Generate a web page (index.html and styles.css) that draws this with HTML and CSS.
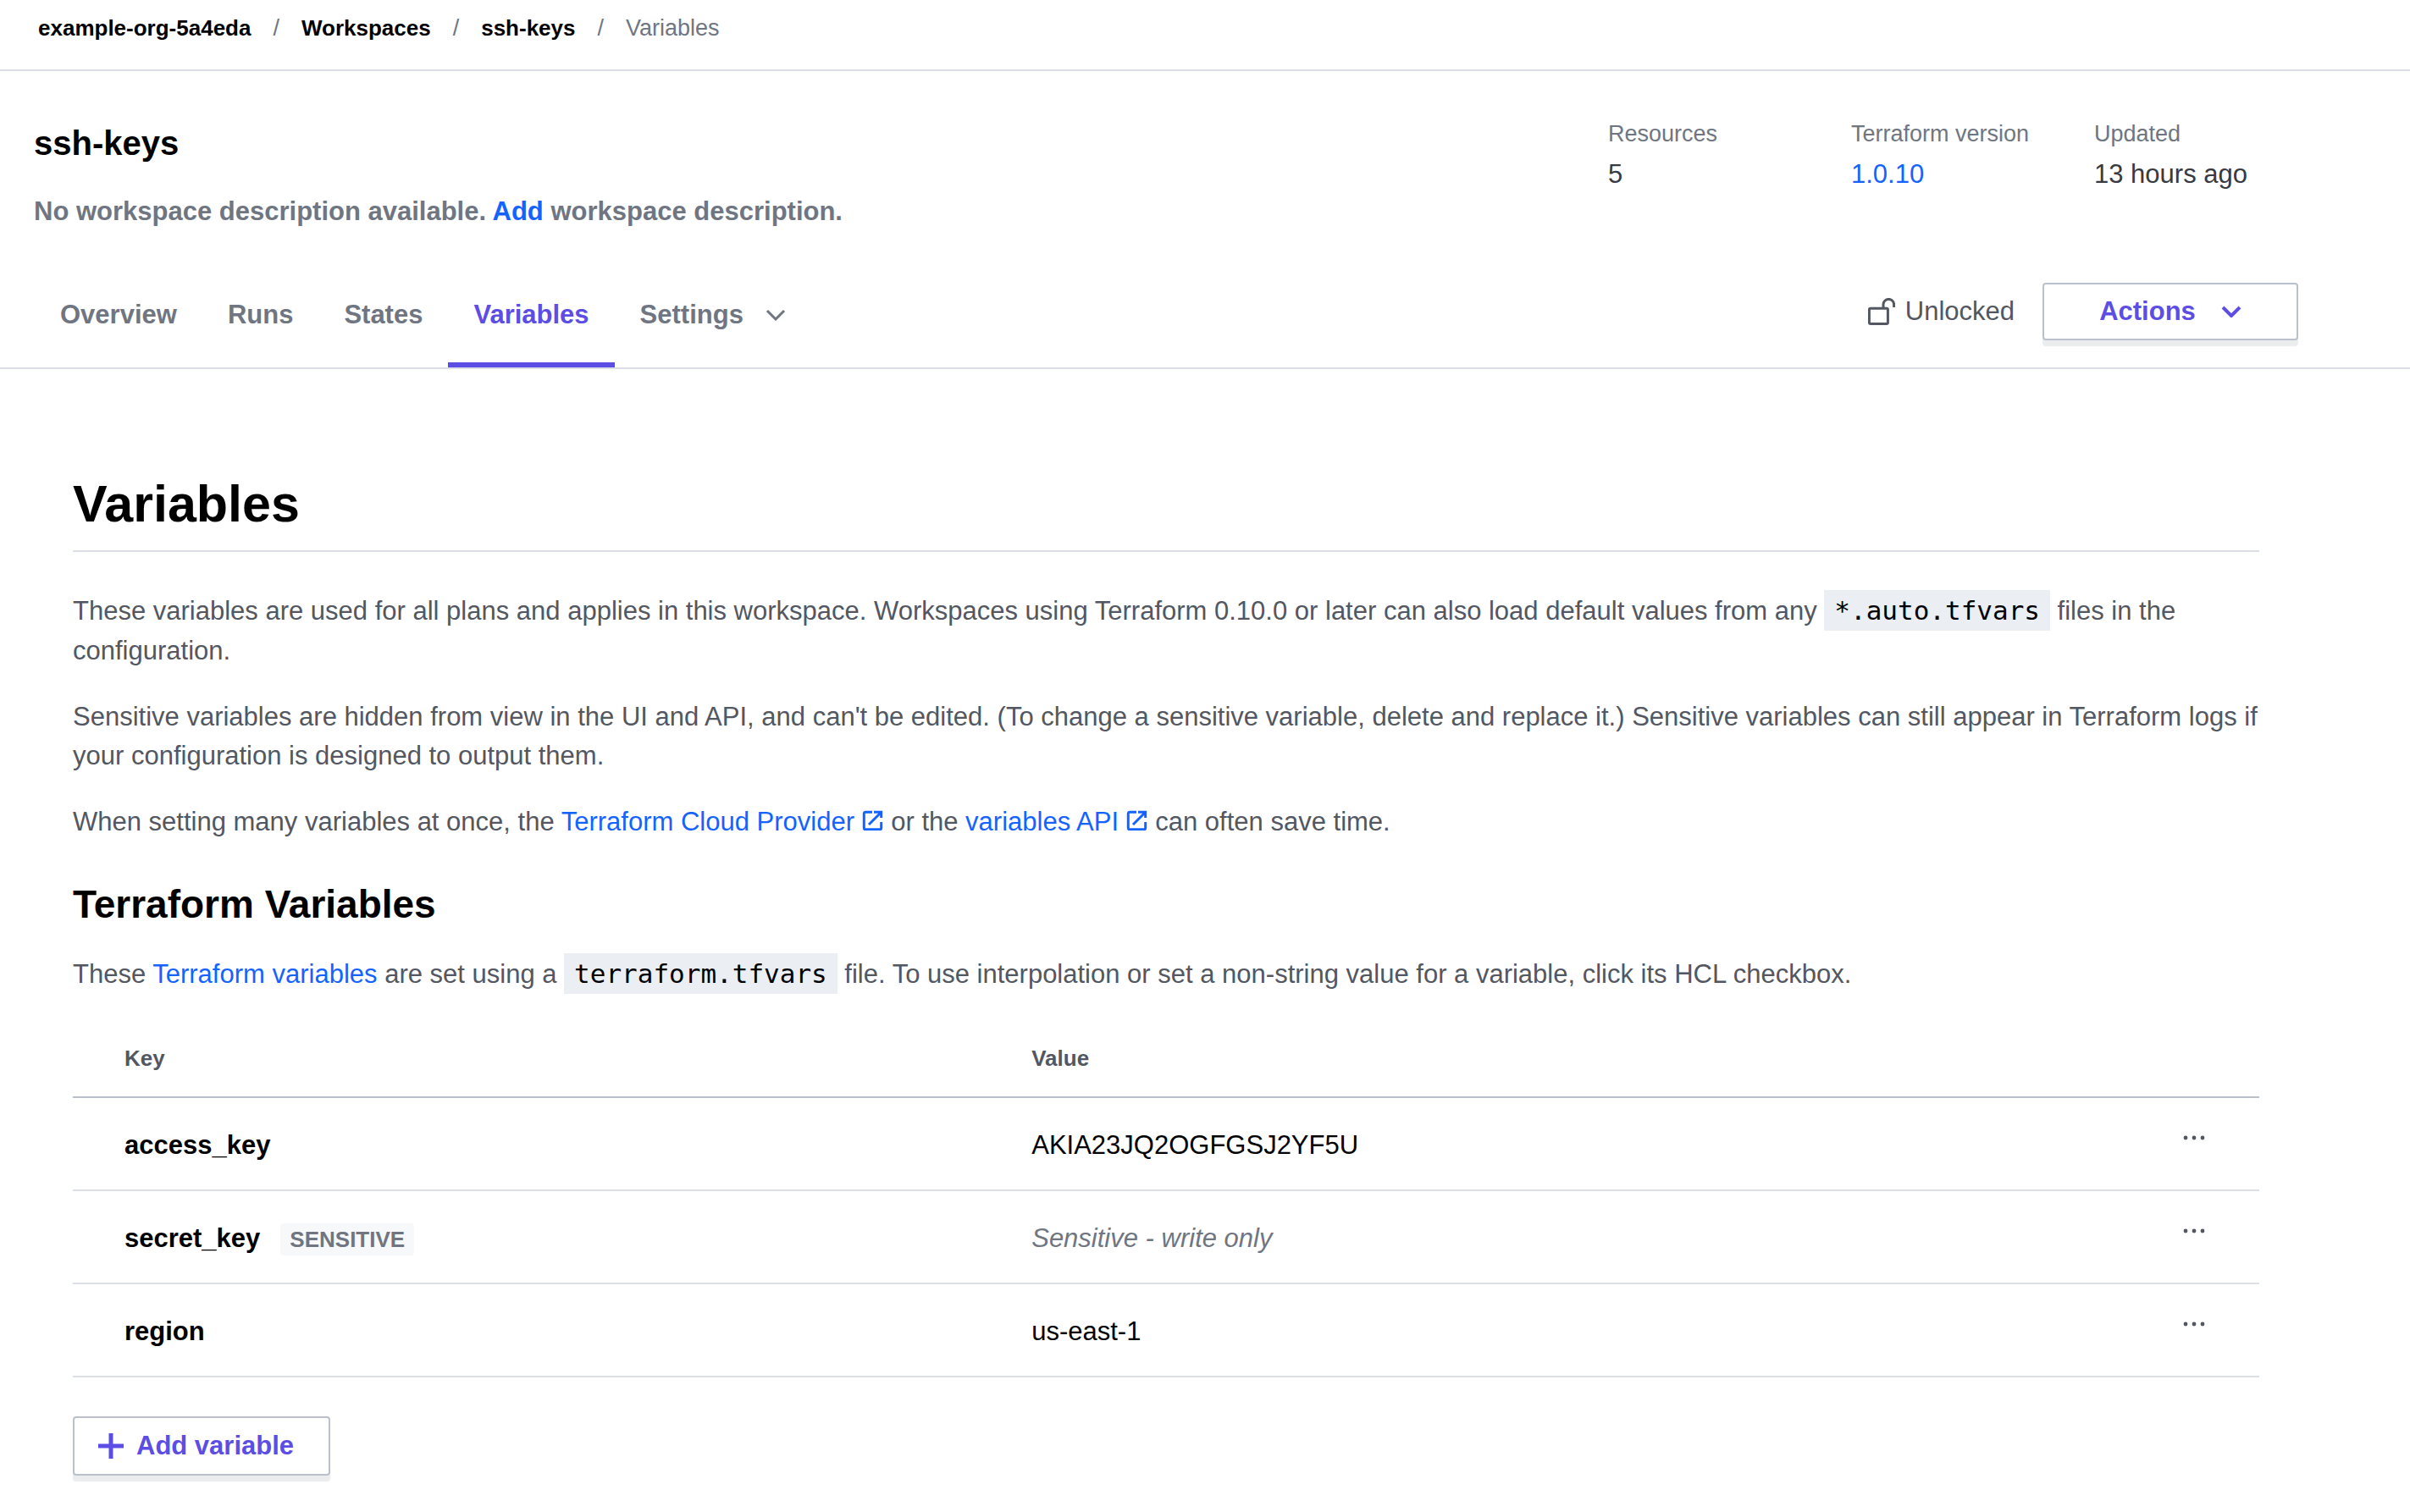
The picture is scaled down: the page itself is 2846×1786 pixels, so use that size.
FILE: index.html
```html
<!DOCTYPE html>
<html lang="en">
<head>
<meta charset="utf-8">
<meta name="viewport" content="width=device-width, initial-scale=1">
<title>Variables | ssh-keys</title>
<link rel="stylesheet" href="styles.css">
</head>
<body>
<nav class="breadcrumbs" aria-label="Breadcrumb">
  <ol class="breadcrumbs-list">
    <li class="crumb"><a href="#org">example-org-5a4eda</a></li>
    <li class="crumb"><a href="#workspaces">Workspaces</a></li>
    <li class="crumb"><a href="#ssh-keys">ssh-keys</a></li>
    <li class="crumb crumb-current" aria-current="page">Variables</li>
  </ol>
</nav>

<header class="workspace">
  <div class="workspace-summary">
    <div class="workspace-title">
      <h2 class="workspace-name">ssh-keys</h2>
      <p class="workspace-description">No workspace description available. <a href="#add-description">Add</a> workspace description.</p>
    </div>
    <dl class="stats">
      <div class="stat"><dt>Resources</dt><dd>5</dd></div>
      <div class="stat"><dt>Terraform version</dt><dd><a href="#version">1.0.10</a></dd></div>
      <div class="stat"><dt>Updated</dt><dd>13 hours ago</dd></div>
    </dl>
  </div>
  <div class="workspace-bar">
    <nav class="tabs" aria-label="Workspace">
      <a class="tab" href="#overview">Overview</a>
      <a class="tab" href="#runs">Runs</a>
      <a class="tab" href="#states">States</a>
      <a class="tab tab-active" href="#variables" aria-current="page">Variables</a>
      <a class="tab" href="#settings">Settings
        <svg class="chevron" viewBox="0 0 24 14" aria-hidden="true"><path d="M2 2l10 10L22 2"/></svg>
      </a>
    </nav>
    <div class="workspace-actions">
      <span class="lock-state">
        <svg class="lock-icon" viewBox="0 0 32 32" aria-hidden="true"><rect x="1.4" y="12.2" width="22" height="18.2" rx="1.5"/><path d="M18 12V7.7a6.3 6.3 0 0 1 12.6 0V11"/></svg>
        Unlocked
      </span>
      <button class="button button-actions" type="button">Actions
        <svg class="chevron chevron-bold" viewBox="0 0 24 14" aria-hidden="true"><path d="M2 2l10 10L22 2"/></svg>
      </button>
    </div>
  </div>
</header>

<main class="content" id="variables">
  <h1 class="page-title">Variables</h1>
  <div class="intro">
    <p>These variables are used for all plans and applies in this workspace. Workspaces using Terraform 0.10.0 or later can also load default values from any <code>*.auto.tfvars</code> files in the configuration.</p>
    <p>Sensitive variables are hidden from view in the UI and API, and can't be edited. (To change a sensitive variable, delete and replace it.) Sensitive variables can still appear in Terraform logs if your configuration is designed to output them.</p>
    <p>When setting many variables at once, the <a href="#provider">Terraform Cloud Provider <svg class="external" viewBox="0 0 26 24" aria-hidden="true"><path d="M12 2.3H4Q2.3 2.3 2.3 4V21Q2.3 22.7 4 22.7H21Q22.7 22.7 22.7 21V14M14 2.3H22.7V9M22 3L8 17"/></svg></a> or the <a href="#api">variables API <svg class="external" viewBox="0 0 26 24" aria-hidden="true"><path d="M12 2.3H4Q2.3 2.3 2.3 4V21Q2.3 22.7 4 22.7H21Q22.7 22.7 22.7 21V14M14 2.3H22.7V9M22 3L8 17"/></svg></a> can often save time.</p>
  </div>

  <section class="variables">
    <h2 class="section-title">Terraform Variables</h2>
    <p>These <a href="#terraform-variables">Terraform variables</a> are set using a <code>terraform.tfvars</code> file. To use interpolation or set a non-string value for a variable, click its HCL checkbox.</p>
    <table class="variables-table">
      <thead>
        <tr><th class="col-key" scope="col">Key</th><th scope="col">Value</th><td class="col-menu"></td></tr>
      </thead>
      <tbody>
        <tr>
          <th scope="row">access_key</th>
          <td>AKIA23JQ2OGFGSJ2YF5U</td>
          <td class="menu-cell"><button class="menu-button" type="button" aria-label="access_key options"><svg viewBox="0 0 26 6" aria-hidden="true"><circle cx="3" cy="3" r="2.4"/><circle cx="13" cy="3" r="2.4"/><circle cx="23" cy="3" r="2.4"/></svg></button></td>
        </tr>
        <tr>
          <th scope="row">secret_key<span class="badge">SENSITIVE</span></th>
          <td class="value-hidden">Sensitive - write only</td>
          <td class="menu-cell"><button class="menu-button" type="button" aria-label="secret_key options"><svg viewBox="0 0 26 6" aria-hidden="true"><circle cx="3" cy="3" r="2.4"/><circle cx="13" cy="3" r="2.4"/><circle cx="23" cy="3" r="2.4"/></svg></button></td>
        </tr>
        <tr>
          <th scope="row">region</th>
          <td>us-east-1</td>
          <td class="menu-cell"><button class="menu-button" type="button" aria-label="region options"><svg viewBox="0 0 26 6" aria-hidden="true"><circle cx="3" cy="3" r="2.4"/><circle cx="13" cy="3" r="2.4"/><circle cx="23" cy="3" r="2.4"/></svg></button></td>
        </tr>
      </tbody>
    </table>
    <button class="button button-add" type="button">
      <svg class="plus" viewBox="0 0 30 30" aria-hidden="true"><path d="M15 0V30M0 15H30"/></svg>
      Add variable
    </button>
  </section>
</main>
</body>
</html>
```
FILE: styles.css
```css
:root {
  --black: #000;
  --gray-800: #373a42;
  --gray-700: #525761;
  --gray-500: #6f7682;
  --gray-300: #bac1cc;
  --gray-200: #dce0e6;
  --gray-100: #ebeef2;
  --gray-050: #f7f8fa;
  --purple: #5c4ee5;
  --blue: #1563ff;
}

* { box-sizing: border-box; }

body {
  margin: 0;
  background: #fff;
  color: var(--gray-700);
  font: 31px/46px "Liberation Sans", Arial, sans-serif;
}

h1, h2, p, dl, dd, ol { margin: 0; padding: 0; }

a { color: var(--blue); text-decoration: none; }

svg { flex: none; fill: none; stroke: currentColor; }

/* Breadcrumbs */
.breadcrumbs {
  padding: 18px 45px 34px;
  border-bottom: 2px solid var(--gray-200);
}

.breadcrumbs-list {
  display: flex;
  list-style: none;
  font-size: 27px;
  line-height: 30px;
}

.crumb a {
  color: var(--black);
  font-size: 26px;
  font-weight: 700;
}

.crumb-current { color: var(--gray-500); }

.crumb + .crumb::before {
  content: "/";
  padding: 0 26px;
  color: var(--gray-500);
}

/* Workspace header */
.workspace { border-bottom: 2px solid var(--gray-200); }

.workspace-summary {
  display: flex;
  justify-content: space-between;
  padding: 59px 86px 0 40px;
}

.workspace-title {
  display: flex;
  flex-direction: column;
  gap: 34px;
  padding-top: 2px;
}

.workspace-name {
  color: var(--black);
  font-size: 40px;
  line-height: 48px;
}

.workspace-description { color: var(--gray-500); font-weight: 700; }

.stats {
  display: grid;
  grid-template-columns: repeat(3, 287px);
}

.stat {
  display: flex;
  flex-direction: column;
  gap: 10px;
}

.stat dt {
  color: var(--gray-500);
  font-size: 27px;
  line-height: 30px;
}

.stat dd { color: var(--gray-800); }

.workspace-bar {
  display: flex;
  justify-content: space-between;
  align-items: flex-start;
  padding: 61px 132px 0 41px;
}

.tabs { display: flex; }

.tab {
  display: flex;
  align-items: center;
  gap: 26px;
  padding: 15px 30px 33px;
  border-bottom: 6px solid transparent;
  color: var(--gray-500);
  font-weight: 700;
}

.tab-active { border-color: var(--purple); color: var(--purple); }

.chevron {
  width: 24px;
  height: 14px;
  stroke-width: 3;
}

.chevron-bold { stroke-width: 4; }

.workspace-actions {
  display: flex;
  align-items: center;
  gap: 33px;
}

.lock-state {
  display: flex;
  align-items: center;
  gap: 12px;
}

.lock-icon {
  width: 32px;
  height: 32px;
  stroke-width: 3;
}

.button {
  display: flex;
  align-items: center;
  border: 2px solid var(--gray-300);
  border-radius: 4px;
  background: #fff;
  box-shadow: 0 7px 1px rgba(37, 42, 60, .09);
  color: var(--purple);
  font: inherit;
  font-weight: 700;
}

.button-actions {
  justify-content: center;
  gap: 30px;
  width: 302px;
  padding: 9px 0;
}

/* Page content */
.content { padding: 123px 178px 36px 86px; }

.page-title {
  padding-bottom: 19px;
  border-bottom: 2px solid var(--gray-200);
  color: var(--black);
  font-size: 61px;
  line-height: 72px;
}

.intro {
  display: flex;
  flex-direction: column;
  gap: 32px;
  margin-top: 45px;
}

code {
  display: inline-block;
  margin-bottom: 1px;
  padding: 6px 12px;
  background: var(--gray-100);
  color: var(--black);
  font: 31px/36px "DejaVu Sans Mono", monospace;
}

.external {
  width: 26px;
  height: 24px;
  stroke-width: 3;
  vertical-align: baseline;
}

.variables { margin-top: 46px; }

.section-title {
  margin-bottom: 30px;
  color: var(--black);
  font-size: 46px;
  line-height: 56px;
}

.variables-table {
  width: 100%;
  margin-top: 30px;
  border-collapse: separate;
  border-spacing: 0;
  table-layout: fixed;
  color: var(--black);
  text-align: left;
}

.variables-table th,
.variables-table td {
  padding: 33px 0 29px;
  border-bottom: 2px solid var(--gray-200);
  vertical-align: top;
}

.variables-table th:first-child { padding-left: 61px; }

.variables-table thead th,
.variables-table thead td {
  padding: 30px 0;
  border-color: var(--gray-300);
  color: var(--gray-700);
  font-size: 26px;
  line-height: 30px;
}

.col-key { width: 43.85%; }
.col-menu { width: 140px; }

.badge {
  display: inline-block;
  margin: -4px 0 -4px 24px;
  padding: 0 11px;
  border-radius: 4px;
  background: var(--gray-050);
  color: var(--gray-500);
  font-size: 26px;
  line-height: 38px;
}

.variables-table .value-hidden { color: var(--gray-500); font-style: italic; }

.variables-table .menu-cell {
  padding: 32px 54px 0 0;
  text-align: right;
}

.menu-button {
  display: inline-flex;
  align-items: center;
  height: 30px;
  padding: 0 10px;
  border: 0;
  background: none;
  color: var(--gray-700);
  vertical-align: top;
}

.menu-button svg {
  width: 26px;
  height: 6px;
  fill: currentColor;
  stroke: none;
}

.button-add {
  gap: 15px;
  margin-top: 46px;
  padding: 10px 41px 10px 28px;
}

.plus {
  width: 30px;
  height: 30px;
  stroke-width: 5;
}
```
